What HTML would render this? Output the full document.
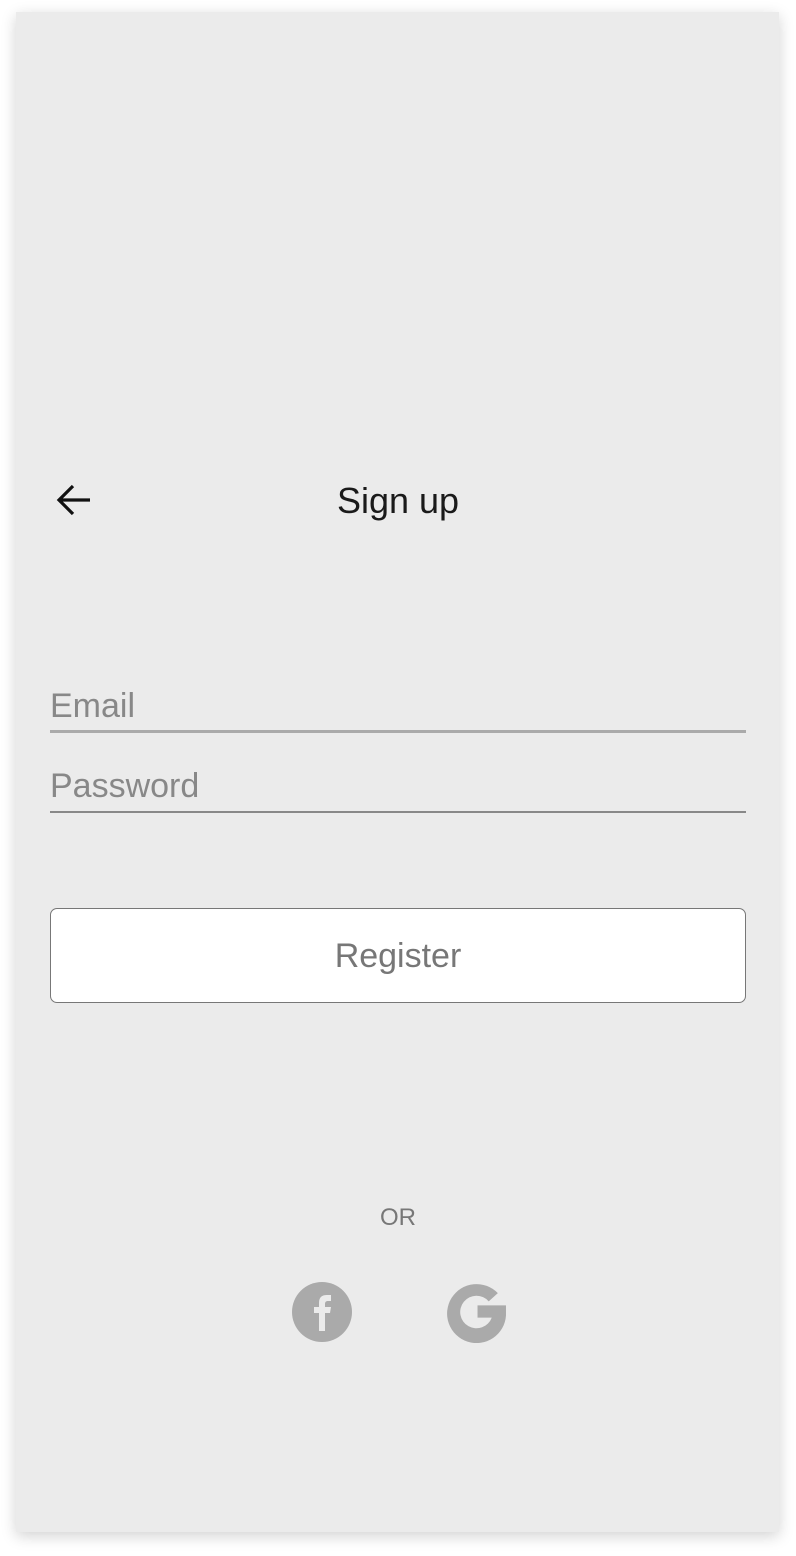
<!DOCTYPE html>
<html><head><style>
body{margin:0;width:796px;height:1556px;background:#fff;font-family:"Liberation Sans",Roboto,sans-serif;position:relative;overflow:hidden}
.panel{position:absolute;left:16px;top:12px;width:763px;height:1520px;background:#ebebeb;box-shadow:0 4px 14px rgba(0,0,0,0.18)}
.a{position:absolute}
</style></head><body>
<div class="panel"></div>
<svg class="a" style="left:55px;top:482px" width="38" height="36" viewBox="0 0 38 36"><path d="M35 18H4M18 4L4 18L18 32" fill="none" stroke="#111" stroke-width="3.2"/></svg>
<div class="a" style="left:0;width:796px;top:480px;text-align:center;font-size:36px;color:#1a1a1a">Sign up</div>
<div class="a" style="left:50px;top:687px;font-size:34px;color:#888">Email</div>
<div class="a" style="left:50px;top:730px;width:696px;height:3px;background:#aaa"></div>
<div class="a" style="left:50px;top:767px;font-size:34px;color:#888">Password</div>
<div class="a" style="left:50px;top:811px;width:696px;height:2px;background:#888"></div>
<div class="a" style="left:50px;top:908px;width:694px;height:93px;background:#fff;border:1px solid #777;border-radius:7px;text-align:center;line-height:95px;font-size:34px;color:#777">Register</div>
<div class="a" style="left:0;width:796px;top:1204px;text-align:center;font-size:24px;color:#777">OR</div>
<svg class="a" style="left:292px;top:1282px" width="60" height="60" viewBox="0 0 60 60"><circle cx="30" cy="30" r="30" fill="#aaa"/><path d="M27 49V31h-5v-6h5v-4c0-6 3-8 8-8h4v6h-3c-2 0-3 1-3 3v3h6l-1 6h-5v18z" fill="#ebebeb"/></svg>
<svg class="a" style="left:446px;top:1282px" width="61" height="61" viewBox="0 0 60 60"><path d="M51 11A29 29 0 1 0 59 33V23H31v12h14a16 16 0 1 1-3-16z" fill="#aaa"/></svg>
</body></html>
